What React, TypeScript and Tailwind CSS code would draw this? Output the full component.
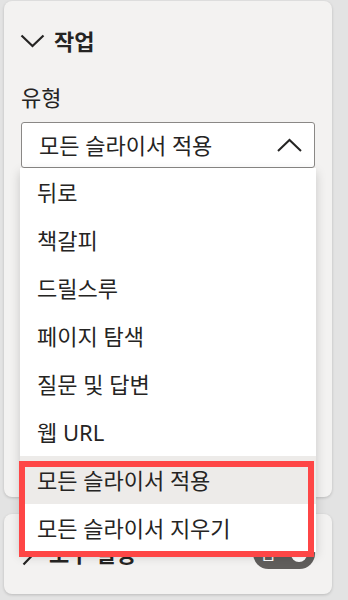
const items = ['뒤로', '책갈피', '드릴스루', '페이지 탐색', '질문 및 답변', '웹 URL', '모든 슬라이서 적용', '모든 슬라이서 지우기'];

function ChevronDown() {
  return (
    <svg width="25" height="14" viewBox="0 0 25 14" fill="none" className="shrink-0">
      <path d="M1.5 1.5 L12.5 12 L23.5 1.5" stroke="#252423" strokeWidth="2.2" />
    </svg>
  );
}

function ChevronUp() {
  return (
    <svg width="25" height="14" viewBox="0 0 25 14" fill="none" className="shrink-0">
      <path d="M1 13 L12.5 2 L24 13" stroke="#252423" strokeWidth="2" />
    </svg>
  );
}

function ChevronRight() {
  return (
    <svg width="14" height="25" viewBox="0 0 14 25" fill="none" className="shrink-0">
      <path d="M1.5 1.5 L12 12.5 L1.5 23.5" stroke="#252423" strokeWidth="2.2" />
    </svg>
  );
}

export default function App() {
  return (
    <div className="relative w-[348px] h-[600px] overflow-hidden bg-[#e3e3e3] pt-px pl-[4px] font-['Noto_Sans','Noto_Sans_CJK_KR',sans-serif] text-[#252423]">
      {/* Actions card */}
      <div className="w-[328px] h-[496px] rounded-[8px] bg-[#f3f2f1] shadow-[0_1px_3px_rgba(0,0,0,0.18)] pt-[24px] pl-[16px]">
        <div className="flex items-center h-[32px] gap-[9px]">
          <ChevronDown />
          <span className="text-[22px] font-bold leading-none">작업</span>
        </div>

        <div className="mt-[25px] h-[30px] pl-px flex items-center text-[22px] leading-none">유형</div>

        <div className="relative mt-[10px] ml-px w-[294px]">
          <div className="h-[46px] flex items-center justify-between border border-[#8a8886] rounded-[3px] bg-white pl-[17px] pr-[12px]">
            <span className="text-[22px] leading-none">모든 슬라이서 적용</span>
            <ChevronUp />
          </div>

          {/* Open menu */}
          <ul className="absolute left-[-1px] top-[46px] z-10 w-[296px] bg-white shadow-[0_4px_10px_rgba(0,0,0,0.18)]">
            {items.map((label, i) => (
              <li
                key={label}
                className={`h-[48px] flex items-center pl-[17px] text-[22px] leading-none ${i === 6 ? 'bg-[#edebe9]' : ''}`}
              >
                {label}
              </li>
            ))}
          </ul>
        </div>
      </div>

      {/* Tooltip card */}
      <div className="mt-[17px] w-[328px] h-[80px] rounded-[8px] bg-[#f3f2f1] shadow-[0_1px_3px_rgba(0,0,0,0.18)] pt-[23px] pl-[18px] pr-[17px] flex items-start justify-between">
        <div className="flex items-center h-[32px] gap-[13px]">
          <ChevronRight />
          <span className="text-[22px] font-bold leading-none">도구 설명</span>
        </div>
        <div className="mt-px h-[31px] w-[62px] rounded-full bg-[#605e5c] flex items-center justify-between px-[8px]">
          <span className="text-[16px] text-white leading-none">끔</span>
          <span className="w-[16px] h-[16px] rounded-full bg-white" />
        </div>
      </div>

      {/* Highlight annotation */}
      <div className="absolute left-[19px] top-[461px] z-20 w-[295px] h-[96px] border-[6px] border-[#fe4646] pointer-events-none" />
    </div>
  );
}
